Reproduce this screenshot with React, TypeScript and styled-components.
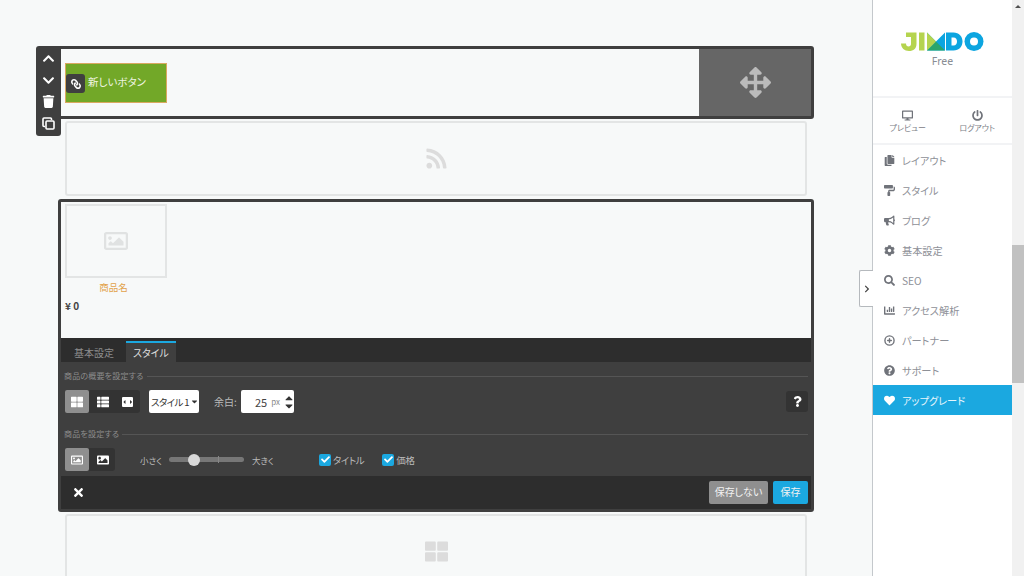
import React from "react";
import { FC } from "react";
import styled, { createGlobalStyle } from "styled-components";
import {
  FaArrowsAlt,
  FaBullhorn,
  FaCaretDown,
  FaCaretUp,
  FaChartBar,
  FaCheck,
  FaChevronDown,
  FaChevronRight,
  FaChevronUp,
  FaCog,
  FaCopy,
  FaDesktop,
  FaHeart,
  FaImage,
  FaLink,
  FaPaintRoller,
  FaPowerOff,
  FaQuestion,
  FaQuestionCircle,
  FaRegImage,
  FaRss,
  FaSearch,
  FaThLarge,
  FaThList,
  FaTimes,
  FaTrash,
} from "react-icons/fa";
import { FiPlusCircle } from "react-icons/fi";

const FONT = `"Noto Sans CJK JP", "Noto Sans", sans-serif`;

const menu = [
  { label: "レイアウト", icon: <FaCopy /> },
  { label: "スタイル", icon: <FaPaintRoller /> },
  { label: "ブログ", icon: <FaBullhorn /> },
  { label: "基本設定", icon: <FaCog /> },
  { label: "SEO", icon: <FaSearch /> },
  { label: "アクセス解析", icon: <FaChartBar /> },
  { label: "パートナー", icon: <FiPlusCircle strokeWidth={3} /> },
  { label: "サポート", icon: <FaQuestionCircle /> },
];

const JimdoLogo: FC = () => (
  <svg width="84" height="19" viewBox="0 0 84 19">
    <path d="M0 11.500h5c0 2 1 3 2.500 3s2.500-1 2.500-2.500V5H5V.5h10.500V12c0 4.500-3 7-7.500 7S0 16 0 11.500z" fill="#b5d44f" />
    <rect x="18" y="0.500" width="5.500" height="18" fill="#b5d44f" />
    <path d="M26 .5L35 9.500 44 .5V18.500H26z" fill="#0ca5e0" />
    <path d="M26 18.500L35 9.500 44 18.500z" fill="#2aa56b" />
    <path d="M26 .5L35 9.500 26 18.500z" fill="#b5d44f" />
    <path d="M45 .5h7.500c5.500 0 9 4 9 9s-3.500 9-9 9H45z" fill="#0ca5e0" />
    <circle cx="73" cy="9.500" r="9.500" fill="#0ca5e0" />
    <circle cx="73" cy="9.500" r="4" fill="#fff" />
    <path d="M50.500 5.500h2c2.500 0 3.500 2 3.500 4s-1 4-3.500 4h-2z" fill="#fff" />
  </svg>
);

const CloneIcon: FC = () => (
  <svg width="13" height="13" viewBox="0 0 13 13" fill="none" stroke="#fff" strokeWidth="1.600">
    <path d="M3 9.500H2a1 1 0 0 1-1-1V2a1 1 0 0 1 1-1h6.500a1 1 0 0 1 1 1v1" />
    <rect x="4" y="4" width="8" height="8" rx="1" />
  </svg>
);

const App: FC = () => {
  return (
    <Page>
      <GlobalStyle />
      <Canvas>
        <FrameBlock>
          <Toolbar>
            <ToolIcon><FaChevronUp /></ToolIcon>
            <ToolIcon><FaChevronDown /></ToolIcon>
            <ToolIcon><FaTrash /></ToolIcon>
            <ToolIcon><CloneIcon /></ToolIcon>
          </Toolbar>
          <ButtonArea>
            <GreenButton>
              <LinkBadge><FaLink /></LinkBadge>
              新しいボタン
            </GreenButton>
          </ButtonArea>
          <DragHandle><FaArrowsAlt /></DragHandle>
        </FrameBlock>

        <PlainBlock $height={75}>
          <FaRss />
        </PlainBlock>

        <EditorFrame>
          <ProductArea>
            <Product>
              <ProductImage><FaRegImage /></ProductImage>
              <ProductName>商品名</ProductName>
            </Product>
            <Price>¥ 0</Price>
          </ProductArea>

          <Tabs>
            <Tab>基本設定</Tab>
            <Tab $active>スタイル</Tab>
          </Tabs>

          <Settings>
            <SectionTitle>商品の概要を設定する</SectionTitle>
            <Row>
              <IconGroup>
                <IconButton $active><FaThLarge /></IconButton>
                <IconButton><FaThList /></IconButton>
                <IconButton><SplitIcon><FaCaretDown /><FaCaretDown /></SplitIcon></IconButton>
              </IconGroup>
              <StyleSelect>スタイル 1<FaCaretDown /></StyleSelect>
              <FieldLabel>余白:</FieldLabel>
              <NumberField>
                <NumberValue>25</NumberValue>
                <Unit>px</Unit>
                <Spinner><FaCaretUp /><FaCaretDown /></Spinner>
              </NumberField>
              <HelpButton><FaQuestion /></HelpButton>
            </Row>
            <SectionTitle>商品を設定する</SectionTitle>
            <Row>
              <IconGroup>
                <IconButton $active><FaRegImage /></IconButton>
                <IconButton><FaImage /></IconButton>
              </IconGroup>
              <SliderLabel $left={25}>小さく</SliderLabel>
              <Slider>
                <SliderTick />
                <SliderKnob />
              </Slider>
              <SliderLabel $left={8}>大きく</SliderLabel>
              <CheckItem $left={46}>
                <CheckBox><FaCheck /></CheckBox>タイトル
              </CheckItem>
              <CheckItem $left={18}>
                <CheckBox><FaCheck /></CheckBox>価格
              </CheckItem>
            </Row>
          </Settings>

          <Footer>
            <CloseIcon><FaTimes /></CloseIcon>
            <FooterButton>保存しない</FooterButton>
            <FooterButton $primary>保存</FooterButton>
          </Footer>
        </EditorFrame>

        <PlainBlock $height={75}>
          <FaThLarge />
        </PlainBlock>
      </Canvas>

      <Sidebar>
        <CollapseTab><FaChevronRight /></CollapseTab>
        <LogoBox>
          <JimdoLogo />
          <Plan>Free</Plan>
        </LogoBox>
        <TopActions>
          <TopAction><FaDesktop />プレビュー</TopAction>
          <TopAction><FaPowerOff />ログアウト</TopAction>
        </TopActions>
        <Menu>
          {menu.map((item) => (
            <MenuItem key={item.label}>
              <MenuIcon>{item.icon}</MenuIcon>
              {item.label}
            </MenuItem>
          ))}
          <MenuItem $highlight>
            <MenuIcon $highlight><FaHeart /></MenuIcon>
            アップグレード
          </MenuItem>
        </Menu>
      </Sidebar>

      <Scrollbar>
        <ScrollArrow />
        <ScrollThumb />
      </Scrollbar>
    </Page>
  );
};

const GlobalStyle = createGlobalStyle`
  html, body {
    margin: 0;
    height: 100%;
    overflow: hidden;
    background-color: #f7f9f9;
    font-family: ${FONT};
    font-feature-settings: "palt";
  }
`;

const Page = styled.div`
  display: flex;
  width: 1024px;
  height: 576px;
  overflow: hidden;
  background-color: #f7f9f9;
`;

const Canvas = styled.div`
  width: 872px;
  flex-shrink: 0;
  padding: 46px 0 0 58px;
  box-sizing: border-box;
`;

const FrameBlock = styled.div`
  position: relative;
  display: flex;
  width: 756px;
  height: 73px;
  box-sizing: border-box;
  border: 3px solid #3f3f3f;
  border-radius: 3px;
`;

const Toolbar = styled.div`
  position: absolute;
  left: -25px;
  top: -3px;
  width: 25px;
  height: 90px;
  padding-top: 2px;
  box-sizing: border-box;
  background-color: #3f3f3f;
  border-radius: 3px 0 3px 3px;
  display: flex;
  flex-direction: column;
  align-items: center;
  z-index: 2;
`;

const ToolIcon = styled.div`
  height: 21.500px;
  display: flex;
  align-items: center;
  justify-content: center;
  color: #fff;
  font-size: 13px;
`;

const ButtonArea = styled.div`
  flex: 1;
  padding: 14px 0 0 4px;
`;

const GreenButton = styled.div`
  position: relative;
  width: 102px;
  height: 40px;
  box-sizing: border-box;
  background-color: #72a828;
  border: 1px solid #d9a860;
  color: #eef4e0;
  font-size: 10.500px;
  line-height: 36px;
  padding-left: 22px;
`;

const LinkBadge = styled.div`
  position: absolute;
  left: 0;
  top: 10px;
  width: 19px;
  height: 19px;
  border-radius: 3px;
  background-color: #3f3f3f;
  color: #fff;
  font-size: 10px;
  display: flex;
  align-items: center;
  justify-content: center;

  svg {
    transform: scaleX(-1);
  }
`;

const DragHandle = styled.div`
  width: 112px;
  background-color: #666;
  color: #bbb;
  font-size: 31px;
  display: flex;
  align-items: center;
  justify-content: center;
`;

const PlainBlock = styled.div<{ $height: number }>`
  width: 742px;
  height: ${(p) => p.$height}px;
  margin: 2px 0 3px 7px;
  box-sizing: border-box;
  border: 2px solid #e3e5e5;
  border-radius: 3px;
  display: flex;
  align-items: center;
  justify-content: center;
  color: #dcdcdc;
  font-size: 23px;
`;

const EditorFrame = styled.div`
  width: 756px;
  height: 313px;
  box-sizing: border-box;
  border: 3px solid #3f3f3f;
  border-radius: 3px;
  display: flex;
  flex-direction: column;
`;

const ProductArea = styled.div`
  height: 136px;
  flex-shrink: 0;
  padding: 2px 0 0 4px;
  box-sizing: border-box;
`;

const Product = styled.div`
  width: 102px;
`;

const ProductImage = styled.div`
  height: 74px;
  box-sizing: border-box;
  border: 2px solid #e3e5e5;
  display: flex;
  align-items: center;
  justify-content: center;
  color: #e0e2e2;
  font-size: 24px;
`;

const ProductName = styled.div`
  margin-top: 2px;
  padding-right: 5px;
  text-align: center;
  font-size: 9.500px;
  line-height: 14px;
  color: #e2a24a;
`;

const Price = styled.div`
  margin-top: 5px;
  font-size: 10px;
  line-height: 13px;
  font-weight: 700;
  color: #444;
`;

const Tabs = styled.div`
  height: 24px;
  flex-shrink: 0;
  display: flex;
  gap: 5px;
  padding: 3px 0 0 6px;
  box-sizing: border-box;
  background-color: #2d2d2d;
`;

const Tab = styled.div<{ $active?: boolean }>`
  padding: 0 7px;
  box-sizing: border-box;
  height: 21px;
  font-size: 10px;
  line-height: 19px;
  color: ${(p) => (p.$active ? "#ddd" : "#8e8e8e")};
  background-color: ${(p) => (p.$active ? "#3f3f3f" : "transparent")};
  border-top: 2px solid ${(p) => (p.$active ? "#1ba8e0" : "transparent")};
`;

const Settings = styled.div`
  flex: 1;
  min-height: 0;
  background-color: #3f3f3f;
  padding: 5px 3px 0 3px;
`;

const SectionTitle = styled.div`
  display: flex;
  align-items: center;
  gap: 3px;
  height: 17px;
  font-size: 8px;
  letter-spacing: 0.200px;
  color: #8d8d8d;

  &::after {
    content: "";
    flex: 1;
    height: 1px;
    margin-top: 2px;
    background-color: #555;
  }
`;

const Row = styled.div`
  display: flex;
  align-items: center;
  height: 23px;
  margin: 6px 0 12px 1px;

  &:last-child {
    margin-bottom: 0;
  }
`;

const IconGroup = styled.div`
  display: flex;
  background-color: #333;
  border-radius: 3px;
`;

const IconButton = styled.div<{ $active?: boolean }>`
  width: ${(p) => (p.$active ? 24 : 25)}px;
  height: 23px;
  margin-right: ${(p) => (p.$active ? 1 : 0)}px;
  border-radius: 2px;
  background-color: ${(p) => (p.$active ? "#8f8f8f" : "transparent")};
  color: #fff;
  font-size: 12px;
  display: flex;
  align-items: center;
  justify-content: center;
`;

const SplitIcon = styled.div`
  width: 11px;
  height: 10px;
  background-color: #fff;
  border-radius: 1px;
  color: #333;
  display: flex;
  align-items: center;
  justify-content: center;
  font-size: 6px;

  svg:first-child {
    transform: rotate(90deg);
  }

  svg:last-child {
    transform: rotate(-90deg);
  }
`;

const StyleSelect = styled.div`
  width: 50px;
  height: 23px;
  margin-left: 9px;
  padding-left: 2px;
  box-sizing: border-box;
  background-color: #fff;
  border-radius: 2px;
  color: #333;
  font-size: 9.500px;
  letter-spacing: -0.600px;
  white-space: nowrap;
  display: flex;
  align-items: center;

  svg {
    font-size: 9px;
    margin-left: 1px;
    flex-shrink: 0;
  }
`;

const FieldLabel = styled.div`
  margin-left: 15px;
  width: 27px;
  font-size: 10px;
  color: #bbb;
`;

const NumberField = styled.div`
  width: 53px;
  height: 23px;
  box-sizing: border-box;
  background-color: #fff;
  border-radius: 2px;
  display: flex;
  align-items: center;
  justify-content: flex-end;
  padding-right: 1px;
`;

const NumberValue = styled.span`
  font-size: 11px;
  color: #444;
  margin-right: 4px;
`;

const Unit = styled.span`
  font-size: 8px;
  color: #888;
  margin-right: 4px;
`;

const Spinner = styled.div`
  width: 9px;
  display: flex;
  flex-direction: column;
  align-items: center;
  color: #333;
  font-size: 12px;
  line-height: 0;

  svg {
    margin: -2px 0;
  }
`;

const HelpButton = styled.div`
  margin-left: auto;
  width: 22px;
  height: 21px;
  border-radius: 3px;
  background-color: #333;
  color: #fff;
  font-size: 11px;
  display: flex;
  align-items: center;
  justify-content: center;
`;

const SliderLabel = styled.div<{ $left: number }>`
  margin-left: ${(p) => p.$left}px;
  width: 21px;
  white-space: nowrap;
  font-size: 8.500px;
  color: #bbb;
`;

const Slider = styled.div`
  position: relative;
  margin-left: 8px;
  width: 75px;
  height: 5px;
  border-radius: 3px;
  background-color: #777;
`;

const SliderTick = styled.div`
  position: absolute;
  left: 49px;
  top: -1px;
  width: 1px;
  height: 7px;
  background-color: #888;
`;

const SliderKnob = styled.div`
  position: absolute;
  left: 19px;
  top: -3.500px;
  width: 12px;
  height: 12px;
  border-radius: 50%;
  background-color: #d8d8d8;
`;

const CheckItem = styled.div<{ $left: number }>`
  margin-left: ${(p) => p.$left}px;
  display: flex;
  align-items: center;
  gap: 2px;
  font-size: 9.500px;
  letter-spacing: -0.400px;
  color: #bbb;
`;

const CheckBox = styled.div`
  width: 12px;
  height: 12px;
  border-radius: 2px;
  background-color: #1ba8e0;
  color: #fff;
  font-size: 9px;
  display: flex;
  align-items: center;
  justify-content: center;
`;

const Footer = styled.div`
  height: 33px;
  flex-shrink: 0;
  background-color: #2d2d2d;
  display: flex;
  align-items: center;
  gap: 5px;
  padding: 0 3px 0 11px;
`;

const CloseIcon = styled.div`
  margin-right: auto;
  color: #fff;
  font-size: 13px;
  display: flex;
`;

const FooterButton = styled.div<{ $primary?: boolean }>`
  height: 23px;
  width: ${(p) => (p.$primary ? 35 : 59)}px;
  text-align: center;
  border-radius: 2px;
  background-color: ${(p) => (p.$primary ? "#1ba8e0" : "#8f8f8f")};
  color: #f2f2f2;
  font-size: 10px;
  line-height: 22px;
`;

const Sidebar = styled.div`
  position: relative;
  width: 140px;
  flex-shrink: 0;
  height: 576px;
  box-sizing: border-box;
  border-left: 1px solid #c4c8cc;
  background-color: #fff;
`;

const CollapseTab = styled.div`
  position: absolute;
  left: -14px;
  top: 270px;
  width: 14px;
  height: 37px;
  box-sizing: border-box;
  background-color: #fff;
  border: 1px solid #b5b9bd;
  border-right: none;
  border-radius: 2px 0 0 2px;
  color: #444;
  font-size: 8px;
  display: flex;
  align-items: center;
  justify-content: center;
`;

const LogoBox = styled.div`
  height: 98px;
  box-sizing: border-box;
  padding-top: 32px;
  border-bottom: 2px solid #f2f3f5;
  display: flex;
  flex-direction: column;
  align-items: center;
`;

const Plan = styled.div`
  margin-top: 2px;
  font-size: 10.500px;
  line-height: 16px;
  color: #8a8d94;
  font-family: "Noto Sans", sans-serif;
`;

const TopActions = styled.div`
  height: 47px;
  box-sizing: border-box;
  display: flex;
  border-bottom: 2px solid #f2f3f5;
  padding-top: 12px;
`;

const TopAction = styled.div`
  flex: 1;
  display: flex;
  flex-direction: column;
  align-items: center;
  gap: 1px;
  font-size: 8px;
  line-height: 11px;
  color: #7d8087;

  svg {
    font-size: 11px;
    color: #70737a;
  }
`;

const Menu = styled.div``;

const MenuItem = styled.div<{ $highlight?: boolean }>`
  height: 30px;
  display: flex;
  align-items: center;
  padding-left: 11px;
  font-size: 10.200px;
  background-color: ${(p) => (p.$highlight ? "#1ba8e0" : "transparent")};
  color: ${(p) => (p.$highlight ? "#e8f6fc" : "#8e9097")};
`;

const MenuIcon = styled.span<{ $highlight?: boolean }>`
  width: 18px;
  display: flex;
  font-size: 11px;
  color: ${(p) => (p.$highlight ? "#fff" : "#70737a")};
`;

const Scrollbar = styled.div`
  position: relative;
  width: 12px;
  flex-shrink: 0;
  background-color: #f1f1f1;
`;

const ScrollArrow = styled.div`
  position: absolute;
  left: 3px;
  top: 5px;
  width: 0;
  height: 0;
  border-left: 3px solid transparent;
  border-right: 3px solid transparent;
  border-bottom: 3px solid #505050;
`;

const ScrollThumb = styled.div`
  position: absolute;
  left: 0;
  top: 245px;
  width: 12px;
  height: 138px;
  background-color: #c1c1c1;
`;

export default App;
